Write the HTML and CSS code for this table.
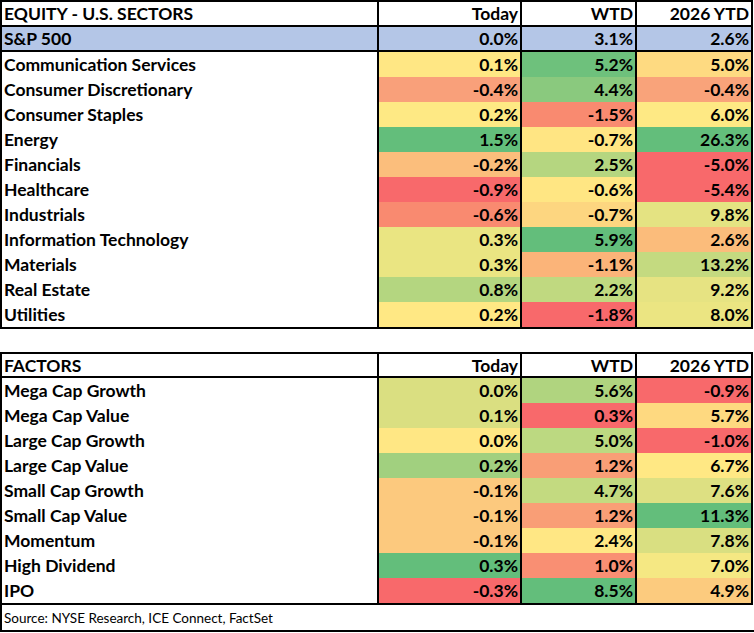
FILE: index.html
```html
<!DOCTYPE html>
<html>
<head>
<meta charset="utf-8">
<link rel="stylesheet" href="styles.css">
</head>
<body>
<div class="page">
  <div class="tbl">
    <div class="row head">
      <div class="lbl">EQUITY - U.S. SECTORS</div>
      <div class="num">Today</div>
      <div class="num">WTD</div>
      <div class="num">2026 YTD</div>
    </div>
    <div class="row spx">
      <div class="lbl">S&amp;P 500</div>
      <div class="num">0.0%</div>
      <div class="num">3.1%</div>
      <div class="num">2.6%</div>
    </div>
    <div class="row">
      <div class="lbl">Communication Services</div>
      <div class="num" style="background:#FFE784">0.1%</div>
      <div class="num" style="background:#6EC17C">5.2%</div>
      <div class="num" style="background:#FEDA81">5.0%</div>
    </div>
    <div class="row">
      <div class="lbl">Consumer Discretionary</div>
      <div class="num" style="background:#F9A07A">-0.4%</div>
      <div class="num" style="background:#8AC97E">4.4%</div>
      <div class="num" style="background:#F9A37A">-0.4%</div>
    </div>
    <div class="row">
      <div class="lbl">Consumer Staples</div>
      <div class="num" style="background:#FEE984">0.2%</div>
      <div class="num" style="background:#F98A70">-1.5%</div>
      <div class="num" style="background:#FEE984">6.0%</div>
    </div>
    <div class="row">
      <div class="lbl">Energy</div>
      <div class="num" style="background:#63BE7B">1.5%</div>
      <div class="num" style="background:#FFE583">-0.7%</div>
      <div class="num" style="background:#63BE7B">26.3%</div>
    </div>
    <div class="row">
      <div class="lbl">Financials</div>
      <div class="num" style="background:#FBBE7C">-0.2%</div>
      <div class="num" style="background:#B5D680">2.5%</div>
      <div class="num" style="background:#F8696B">-5.0%</div>
    </div>
    <div class="row">
      <div class="lbl">Healthcare</div>
      <div class="num" style="background:#F8696B">-0.9%</div>
      <div class="num" style="background:#FFE683">-0.6%</div>
      <div class="num" style="background:#F8696B">-5.4%</div>
    </div>
    <div class="row">
      <div class="lbl">Industrials</div>
      <div class="num" style="background:#F98A70">-0.6%</div>
      <div class="num" style="background:#FDD680">-0.7%</div>
      <div class="num" style="background:#E4E382">9.8%</div>
    </div>
    <div class="row">
      <div class="lbl">Information Technology</div>
      <div class="num" style="background:#EAE582">0.3%</div>
      <div class="num" style="background:#63BE7B">5.9%</div>
      <div class="num" style="background:#FBBC7B">2.6%</div>
    </div>
    <div class="row">
      <div class="lbl">Materials</div>
      <div class="num" style="background:#EAE582">0.3%</div>
      <div class="num" style="background:#FBB479">-1.1%</div>
      <div class="num" style="background:#C4DA80">13.2%</div>
    </div>
    <div class="row">
      <div class="lbl">Real Estate</div>
      <div class="num" style="background:#B4D680">0.8%</div>
      <div class="num" style="background:#C0D980">2.2%</div>
      <div class="num" style="background:#E6E382">9.2%</div>
    </div>
    <div class="row">
      <div class="lbl">Utilities</div>
      <div class="num" style="background:#FFE884">0.2%</div>
      <div class="num" style="background:#F8696B">-1.8%</div>
      <div class="num" style="background:#EBE582">8.0%</div>
    </div>
  </div>

  <div class="tbl second">
    <div class="row head head2">
      <div class="lbl">FACTORS</div>
      <div class="num">Today</div>
      <div class="num">WTD</div>
      <div class="num">2026 YTD</div>
    </div>
    <div class="row">
      <div class="lbl">Mega Cap Growth</div>
      <div class="num" style="background:#DADF81">0.0%</div>
      <div class="num" style="background:#B0D47F">5.6%</div>
      <div class="num" style="background:#F8696B">-0.9%</div>
    </div>
    <div class="row">
      <div class="lbl">Mega Cap Value</div>
      <div class="num" style="background:#DADF81">0.1%</div>
      <div class="num" style="background:#F8696B">0.3%</div>
      <div class="num" style="background:#FED980">5.7%</div>
    </div>
    <div class="row">
      <div class="lbl">Large Cap Growth</div>
      <div class="num" style="background:#FFE784">0.0%</div>
      <div class="num" style="background:#BCD981">5.0%</div>
      <div class="num" style="background:#F8696B">-1.0%</div>
    </div>
    <div class="row">
      <div class="lbl">Large Cap Value</div>
      <div class="num" style="background:#A1D07F">0.2%</div>
      <div class="num" style="background:#F99E76">1.2%</div>
      <div class="num" style="background:#FFE884">6.7%</div>
    </div>
    <div class="row">
      <div class="lbl">Small Cap Growth</div>
      <div class="num" style="background:#FCC97E">-0.1%</div>
      <div class="num" style="background:#C3DA80">4.7%</div>
      <div class="num" style="background:#DDE082">7.6%</div>
    </div>
    <div class="row">
      <div class="lbl">Small Cap Value</div>
      <div class="num" style="background:#FCC97E">-0.1%</div>
      <div class="num" style="background:#F99E76">1.2%</div>
      <div class="num" style="background:#63BE7B">11.3%</div>
    </div>
    <div class="row">
      <div class="lbl">Momentum</div>
      <div class="num" style="background:#FCC97E">-0.1%</div>
      <div class="num" style="background:#FFE784">2.4%</div>
      <div class="num" style="background:#D9DF81">7.8%</div>
    </div>
    <div class="row">
      <div class="lbl">High Dividend</div>
      <div class="num" style="background:#63BE7B">0.3%</div>
      <div class="num" style="background:#F98F73">1.0%</div>
      <div class="num" style="background:#F5E883">7.0%</div>
    </div>
    <div class="row">
      <div class="lbl">IPO</div>
      <div class="num" style="background:#F8696B">-0.3%</div>
      <div class="num" style="background:#63BE7B">8.5%</div>
      <div class="num" style="background:#FCCB7E">4.9%</div>
    </div>
  </div>
  <div class="source">Source: NYSE Research, ICE Connect, FactSet</div>
</div>
</body>
</html>
```

FILE: styles.css
```css
html, body {
  margin: 0;
  padding: 0;
  background: #ffffff;
  overflow: hidden;
}

.page {
  width: 754px;
  font-family: Lato, "Liberation Sans", sans-serif;
  color: #000000;
}

.tbl {
  width: 749px;
  border: 2px solid #000000;
}

.second {
  margin-top: 23px;
}

.row {
  display: grid;
  grid-template-columns: 375px 143px 115px 116px;
  height: 25px;
  line-height: 25px;
  font-size: 17.5px;
  font-weight: 700;
}

.lbl {
  padding-left: 2px;
  white-space: nowrap;
  overflow: hidden;
}

.num {
  border-left: 2px solid #000000;
  text-align: right;
  padding-right: 2px;
  white-space: nowrap;
}

.head {
  height: 23px;
  line-height: 24px;
  border-bottom: 2px solid #000000;
}

.head2 {
  height: 22px;
  line-height: 23px;
}

.spx {
  height: 23px;
  line-height: 24px;
  border-bottom: 2px solid #000000;
  background: #B4C6E7;
}

.source {
  box-sizing: border-box;
  width: 754px;
  height: 27px;
  padding-top: 1px;
  line-height: 24px;
  border-left: 2px solid #000000;
  border-bottom: 2px solid #000000;
  padding-left: 2px;
  font-size: 13.5px;
  font-weight: 400;
}
```
